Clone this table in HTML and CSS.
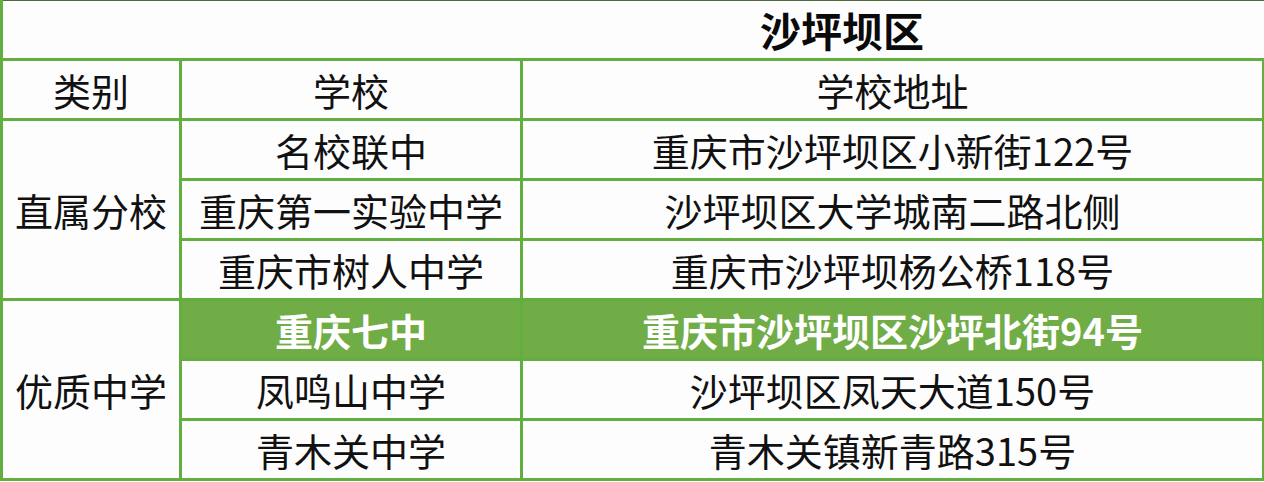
FILE: index.html
```html
<!DOCTYPE html>
<html lang="zh-CN">
<head>
<meta charset="utf-8">
<title>沙坪坝区</title>
<link rel="stylesheet" href="styles.css">
</head>
<body>
<table class="sheet">
  <colgroup>
    <col class="c1">
    <col class="c2">
    <col class="c3">
  </colgroup>
  <tr class="title-row">
    <td class="title" colspan="3">沙坪坝区</td>
  </tr>
  <tr>
    <td>类别</td>
    <td>学校</td>
    <td>学校地址</td>
  </tr>
  <tr>
    <td rowspan="3">直属分校</td>
    <td>名校联中</td>
    <td>重庆市沙坪坝区小新街122号</td>
  </tr>
  <tr>
    <td>重庆第一实验中学</td>
    <td>沙坪坝区大学城南二路北侧</td>
  </tr>
  <tr>
    <td>重庆市树人中学</td>
    <td>重庆市沙坪坝杨公桥118号</td>
  </tr>
  <tr>
    <td rowspan="3">优质中学</td>
    <td class="hl">重庆七中</td>
    <td class="hl">重庆市沙坪坝区沙坪北街94号</td>
  </tr>
  <tr>
    <td>凤鸣山中学</td>
    <td>沙坪坝区凤天大道150号</td>
  </tr>
  <tr>
    <td>青木关中学</td>
    <td>青木关镇新青路315号</td>
  </tr>
</table>
</body>
</html>
```

FILE: styles.css
```css
html, body {
  margin: 0;
  padding: 0;
  background: #fefdfe;
}

body {
  font-family: "Noto Sans CJK SC", "Noto Sans", sans-serif;
  color: #111;
}

.sheet {
  border-collapse: collapse;
  table-layout: fixed;
  width: 1262px;
  margin: 0;
}

.c1 { width: 179px; }
.c2 { width: 341px; }
.c3 { width: 742px; }

.sheet td {
  border: 3px solid #62ae3f;
  height: 57px;
  padding: 0;
  font-size: 38px;
  line-height: 1;
  text-align: center;
  vertical-align: middle;
  white-space: nowrap;
}

.sheet .title {
  border-top: 1px solid #4b6a3c;
  border-right: none;
  text-align: left;
  padding-left: 757px;
  font-size: 41px;
  font-weight: 700;
  color: #0a0a0a;
}

.sheet .hl {
  background: #70ad47;
  color: #fff;
  font-weight: 700;
}
```
